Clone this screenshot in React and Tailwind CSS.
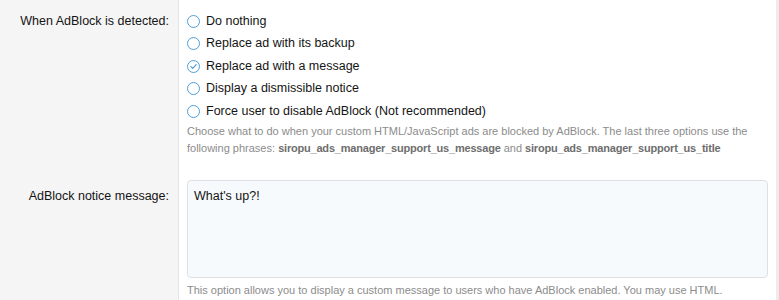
export default function App() {
  const options = [
    { label: "Do nothing", checked: false },
    { label: "Replace ad with its backup", checked: false },
    { label: "Replace ad with a message", checked: true },
    { label: "Display a dismissible notice", checked: false },
    { label: "Force user to disable AdBlock (Not recommended)", checked: false },
  ];

  return (
    <div className="w-[779px] h-[300px] overflow-hidden bg-[#ececec] font-['Liberation_Sans',Arial,sans-serif] text-[12.5px] text-[#141414]">
      <div className="flex h-full w-[776px]">
        {/* Labels */}
        <div className="w-[179px] shrink-0 bg-[#f5f5f5] border-r border-[#e5e5e5]">
          <div className="h-[171px] pt-[13px] pr-[9px] text-right leading-[17px]">
            When AdBlock is detected:
          </div>
          <div className="pt-[17px] pr-[9px] text-right leading-[17px]">
            AdBlock notice message:
          </div>
        </div>

        {/* Controls */}
        <div className="flex-1 bg-white pl-[8px] pr-[8px]">
          <div className="h-[171px] pt-[10px]">
            <ul className="flex flex-col">
              {options.map((o) => (
                <li key={o.label} className="flex items-center h-[22.5px] gap-[6px]">
                  <span className="w-[13px] h-[13px] rounded-full border border-[#4f9fd8] flex items-center justify-center shrink-0">
                    {o.checked && (
                      <svg width="9" height="9" viewBox="0 0 9 9" fill="none">
                        <path d="M1.8 4.6 L3.7 6.4 L7.2 2.7" stroke="#4f9fd8" strokeWidth="1.2" strokeLinecap="round" strokeLinejoin="round" />
                      </svg>
                    )}
                  </span>
                  <span className="leading-[17px]">{o.label}</span>
                </li>
              ))}
            </ul>
            <p className="text-[11px] leading-[17px] text-[#8c8c8c]">
              Choose what to do when your custom HTML/JavaScript ads are blocked by AdBlock. The last three options use the following phrases:{" "}
              <b className="tracking-[-0.2px] text-[#6e6e6e]">siropu_ads_manager_support_us_message</b> and{" "}
              <b className="tracking-[-0.2px] text-[#6e6e6e]">siropu_ads_manager_support_us_title</b>
            </p>
          </div>

          <div className="pt-[9px]">
            <div className="h-[98px] w-[581px] rounded-[4px] border border-[#dde1e5] bg-[#f7fafc] px-[6px] py-[7px] leading-[17px]">
              What's up?!
            </div>
            <p className="mt-[4px] text-[11px] leading-[17px] text-[#8c8c8c]">
              This option allows you to display a custom message to users who have AdBlock enabled. You may use HTML.
            </p>
          </div>
        </div>
      </div>
    </div>
  );
}
